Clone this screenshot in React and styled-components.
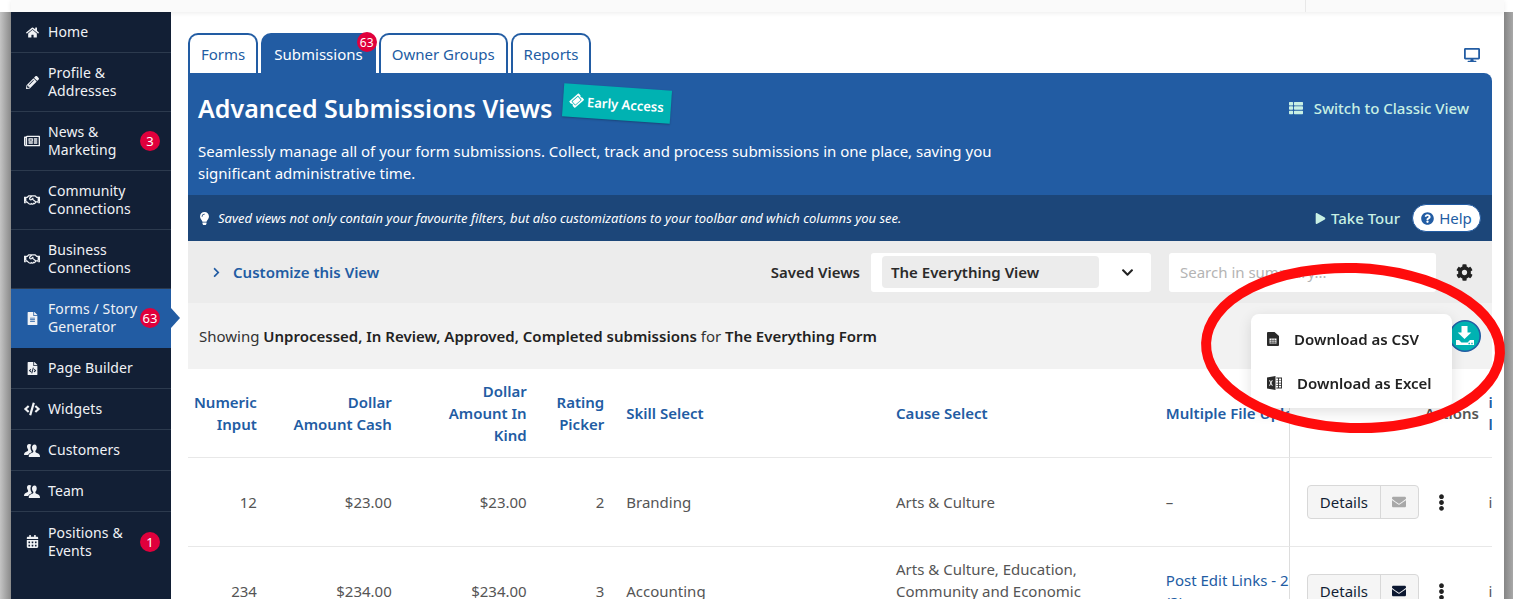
import React, { useLayoutEffect, useRef } from 'react';
import styled, { createGlobalStyle } from 'styled-components';
import {
  FaHome, FaPencilAlt, FaRegNewspaper, FaRegHandshake, FaFileAlt, FaFileCode, FaCode,
  FaCalendarAlt, FaTicketAlt, FaThList, FaDesktop, FaLightbulb, FaPlay, FaQuestionCircle,
  FaChevronRight, FaChevronDown, FaCog, FaEnvelope, FaEllipsisV,
} from 'react-icons/fa';

const BLUE = '#225ca3';
const FONT = '"Noto Sans", "Open Sans", Arial, sans-serif';

const GlobalStyle = createGlobalStyle`
  html, body { margin: 0; padding: 0; height: 100%; overflow: hidden; }
  body { font-family: ${FONT}; font-size: 15px; color: #222; background: #fff; }
  * { box-sizing: border-box; }
`;

const Frame = styled.div`
  width: 1513px;
  height: 599px;
  display: flex;
  position: relative;
  overflow: hidden;
`;

const LeftGutter = styled.div`
  width: 11px;
  flex: none;
  background: linear-gradient(to right, #c4c4c4, #8a8a8a);
  margin-top: 12px;
`;

const RightGutter = styled.div`
  width: 9px;
  flex: none;
  background: linear-gradient(to right, #858585, #a8a8a8);
  margin-top: 12px;
`;

const Center = styled.div`
  flex: 1;
  display: flex;
  flex-direction: column;
  min-width: 0;
`;

const TopBar = styled.div`
  height: 12px;
  flex: none;
  background: #fafafa;
  box-shadow: 0 1px 5px rgba(0, 0, 0, 0.08);
  display: flex;
  justify-content: flex-end;
  position: relative;
  z-index: 2;
`;

const TopCell = styled.div`
  width: 199px;
  border-left: 1px solid #e8e8e8;
`;

const Body = styled.div`
  flex: 1;
  display: flex;
  min-height: 0;
`;

const Sidebar = styled.nav`
  width: 160px;
  flex: none;
  background: #121f35;
  color: #fff;
`;

const NavItem = styled.a`
  display: flex;
  align-items: center;
  position: relative;
  height: ${(p) => (p.$tall ? 59 : 41)}px;
  padding-left: 13px;
  border-bottom: 1px solid ${(p) => (p.$active ? BLUE : '#2c3a4e')};
  background: ${(p) => (p.$active ? BLUE : 'transparent')};
  font-size: 14px;
  line-height: 18px;
  color: #f0f2f5;

  &:last-child { border-bottom: 0; }

  ${(p) => p.$active && `
    &::after {
      content: '';
      position: absolute;
      right: -9px;
      top: 50%;
      margin-top: -10px;
      border-left: 9px solid ${BLUE};
      border-top: 10px solid transparent;
      border-bottom: 10px solid transparent;
    }
  `}
`;

const NavIcon = styled.span`
  width: 16px;
  height: 16px;
  margin-right: 8px;
  display: flex;
  align-items: center;
  justify-content: center;
  font-size: 13px;
  flex: none;
`;

const NavLabel = styled.span`
  flex: 1;
  letter-spacing: 0.1px;
`;

const Badge = styled.span`
  width: 20px;
  height: 20px;
  border-radius: 50%;
  background: #e0003c;
  color: #fff;
  font-size: 13px;
  display: flex;
  align-items: center;
  justify-content: center;
  margin-right: 11px;
  flex: none;
`;

const Main = styled.main`
  flex: 1;
  min-width: 0;
  padding: 21px 12px 0 17px;
  display: flex;
  flex-direction: column;
`;

const TabRow = styled.div`
  display: flex;
  align-items: flex-end;
  height: 40px;
  flex: none;
  gap: 3px;
  position: relative;
`;

const Tab = styled.a`
  height: 40px;
  padding: 0 ${(p) => p.$pad || 11}px;
  display: flex;
  align-items: center;
  border: 2px solid ${BLUE};
  border-bottom: 0;
  border-radius: 10px 10px 0 0;
  background: ${(p) => (p.$active ? BLUE : '#fff')};
  color: ${(p) => (p.$active ? '#fff' : BLUE)};
  font-size: 15px;
  position: relative;
`;

const TabBadge = styled.span`
  position: absolute;
  top: -3px;
  right: -3px;
  width: 20px;
  height: 20px;
  border-radius: 50%;
  background: #e0003c;
  color: #fff;
  font-size: 12px;
  display: flex;
  align-items: center;
  justify-content: center;
`;

const DesktopToggle = styled.span`
  margin-left: auto;
  margin-right: 12px;
  margin-bottom: 10px;
  color: ${BLUE};
  font-size: 16px;
  display: flex;
`;

const Hero = styled.section`
  height: 122px;
  flex: none;
  background: ${BLUE};
  border-radius: 0 8px 0 0;
  color: #fff;
  padding: 18px 23px 0 10px;
  position: relative;
`;

const HeroTop = styled.div`
  display: flex;
  align-items: center;
  height: 34px;
`;

const HeroTitle = styled.h1`
  margin: 0;
  font-size: 25px;
  line-height: 34px;
  font-weight: 600;
`;

const EarlyAccess = styled.span`
  display: inline-flex;
  align-items: center;
  gap: 4px;
  height: 33px;
  width: 108px;
  margin: -10px 0 0 11px;
  padding-left: 7px;
  background: #00b2b2;
  color: #fff;
  font-size: 13px;
  font-weight: 600;
  transform: rotate(4deg);
  box-shadow: 0 1px 2px rgba(0, 0, 0, 0.25);
`;

const ClassicLink = styled.a`
  margin-left: auto;
  display: flex;
  align-items: center;
  gap: 11px;
  color: #c8f0e4;
  font-size: 15px;
  font-weight: 500;
`;

const HeroText = styled.p`
  margin: 15px 0 0;
  width: 860px;
  font-size: 15px;
  line-height: 22px;
`;

const TipBar = styled.div`
  height: 46px;
  flex: none;
  background: #1c4679;
  color: #fff;
  display: flex;
  align-items: center;
  padding: 0 11px 0 10px;
`;

const TipText = styled.em`
  margin-left: 7px;
  font-size: 13px;
  flex: 1;
`;

const TourLink = styled.a`
  display: flex;
  align-items: center;
  gap: 5px;
  color: #c8f0e4;
  font-size: 15px;
  font-weight: 500;
`;

const HelpButton = styled.a`
  margin-left: 12px;
  height: 28px;
  width: 69px;
  border-radius: 14px;
  background: #fff;
  border: 1px solid ${BLUE};
  color: ${BLUE};
  font-size: 15px;
  display: flex;
  align-items: center;
  justify-content: center;
  gap: 5px;
`;

const Toolbar = styled.div`
  height: 62px;
  flex: none;
  background: #ececec;
  display: flex;
  align-items: center;
  padding: 0 19px 0 23px;
`;

const CustomizeLink = styled.a`
  display: flex;
  align-items: center;
  gap: 11px;
  color: ${BLUE};
  font-weight: 600;
  font-size: 15px;
  flex: 1;
`;

const SavedLabel = styled.span`
  font-weight: 600;
  font-size: 15px;
  color: #2a2a2a;
`;

const SavedSelect = styled.div`
  width: 280px;
  height: 39px;
  margin-left: 11px;
  background: #fff;
  border-radius: 3px;
  display: flex;
  align-items: center;
  padding: 0 17px 0 11px;
`;

const SavedValue = styled.span`
  flex: 1;
  height: 32px;
  margin-right: 22px;
  background: #ececec;
  border-radius: 4px;
  display: flex;
  align-items: center;
  padding-left: 9px;
  font-weight: 600;
  font-size: 15px;
  color: #2a2a2a;
`;

const SearchBox = styled.input`
  width: 267px;
  height: 39px;
  margin-left: 18px;
  border: 0;
  outline: 0;
  border-radius: 3px;
  background: #fff;
  padding: 0 11px;
  font-family: ${FONT};
  font-size: 15px;

  &::placeholder { color: #b4b4b4; }
`;

const GearButton = styled.span`
  margin-left: 20px;
  display: flex;
  font-size: 17px;
  color: #222;
`;

const InfoBar = styled.div`
  height: 66px;
  flex: none;
  background: #f2f2f2;
  display: flex;
  align-items: center;
  padding: 0 11px;
  font-size: 15px;
  color: #333;
  position: relative;
`;

const InfoText = styled.p`
  margin: 0;
  flex: 1;

  strong { font-weight: 600; color: #222; }
`;

const DownloadButton = styled.span`
  display: flex;
`;

const DownloadMenu = styled.div`
  position: absolute;
  top: 11px;
  right: 40px;
  width: 201px;
  height: 94px;
  background: #fff;
  border-radius: 8px;
  box-shadow: 0 4px 14px rgba(0, 0, 0, 0.12);
  padding: 3px 0;
  z-index: 5;
`;

const MenuItem = styled.a`
  height: 44px;
  display: flex;
  align-items: center;
  padding-left: 16px;
  gap: 15px;
  font-size: 15px;
  font-weight: 600;
  color: #222;
`;

const TableScroll = styled.div`
  flex: 1;
  min-height: 0;
  overflow: hidden;
`;

const Grid = styled.table`
  table-layout: fixed;
  border-collapse: separate;
  border-spacing: 0;
  width: 1720px;
  font-size: 15px;
`;

const HeadCell = styled.th`
  height: 89px;
  padding: 0 11px;
  border-bottom: 1px solid #e8e8e8;
  color: ${BLUE};
  font-weight: 600;
  line-height: 22px;
  text-align: ${(p) => (p.$right ? 'right' : 'left')};
`;

const Cell = styled.td`
  height: 89px;
  padding: 0 11px;
  border-bottom: 1px solid #e8e8e8;
  color: #555;
  line-height: 22px;
  text-align: ${(p) => (p.$right ? 'right' : 'left')};
  vertical-align: middle;
`;

const FileLink = styled.a`
  color: ${BLUE};
`;

const ActionsHead = styled(HeadCell)`
  position: sticky;
  right: 3px;
  background: #fff;
  border-left: 1px solid #ddd;
  color: #555;
  padding-right: 10px;
`;

const ActionsCell = styled(Cell)`
  position: sticky;
  right: 3px;
  background: #fff;
  border-left: 1px solid #ddd;
  padding: 0 0 0 17px;
`;

const EdgeHead = styled(HeadCell)`
  position: sticky;
  right: 0;
  background: #fff;
  padding: 0;
  overflow: hidden;
  white-space: nowrap;
`;

const EdgeCell = styled(Cell)`
  position: sticky;
  right: 0;
  background: #fff;
  padding: 0;
  overflow: hidden;
  white-space: nowrap;
`;

const ActionRow = styled.div`
  display: flex;
  align-items: center;
`;

const DetailsGroup = styled.div`
  display: flex;
  height: 34px;
  border: 1px solid #d8d8d8;
  border-radius: 4px;
  background: #f5f5f5;
`;

const DetailsButton = styled.a`
  width: 73px;
  display: flex;
  align-items: center;
  justify-content: center;
  border-right: 1px solid #d8d8d8;
  color: #121f35;
  font-size: 15px;
`;

const MailButton = styled.a`
  width: 37px;
  display: flex;
  align-items: center;
  justify-content: center;
  font-size: 14px;
  color: ${(p) => (p.$read ? '#a8a8a8' : '#0b1730')};
`;

const MoreButton = styled.span`
  margin-left: 14px;
  display: flex;
  font-size: 17px;
  color: #222;
`;

const Annotation = styled.svg`
  position: absolute;
  left: 1190px;
  top: 250px;
  z-index: 10;
  pointer-events: none;
`;

const PeopleIcon = () => (
  <svg width="16" height="15" viewBox="0 0 16 15" fill="currentColor">
    <path d="M5.2 1C3.7 1 3 2.2 3 3.6c0 1.2.5 2.2 1.1 2.8v1C3.4 8.4.7 8.8.2 10.6L0 12h4.2c.5-1.5 2.2-2.2 3.5-2.7V8.2C6.9 7.3 6.4 5.9 6.5 4.5c0-1.2.3-2.2.9-2.7C6.9 1.3 6.1 1 5.2 1z" />
    <path d="M10.6 1.6C8.9 1.6 8 3 8 4.6c0 1.4.6 2.6 1.3 3.2v1.1c-.8 1-3.8 1.4-4.4 3.3l-.2 1.8H16l-.2-1.8c-.5-1.9-3.6-2.3-4.4-3.3V7.8c.7-.6 1.3-1.8 1.3-3.2 0-1.6-.4-3-2.1-3z" />
  </svg>
);

const CsvIcon = () => (
  <svg width="12" height="14" viewBox="0 0 12 14" fill="#2a2a2a">
    <path d="M0 1a1 1 0 0 1 1-1h6.5L12 4v9a1 1 0 0 1-1 1H1a1 1 0 0 1-1-1z" />
    <path fill="#fff" d="M2.5 6.5h7v5h-7z" />
    <path d="M2.5 8h7v.6h-7zM2.5 9.8h7v.6h-7zM4.6 6.5h.6v5h-.6zM6.8 6.5h.6v5h-.6z" />
  </svg>
);

const ExcelIcon = () => (
  <svg width="15" height="14" viewBox="0 0 15 14" fill="#2a2a2a">
    <path d="M0 1.6 8.5 0v14L0 12.4z" />
    <path fill="#fff" d="m2 4.2 1 .0.9 1.7.9-1.7h1L4.4 7l1.5 2.8h-1L3.9 8 3 9.8H2L3.4 7z" />
    <path d="M9.3 1.6H15v10.8H9.3v-.9h1.8V9.9H9.3v-.7h1.8V7.4H9.3v-.7h1.8V5.1H9.3v-.7h1.8V2.6H9.3zM12 2.6v1.8h2.1V2.6zm0 2.5v1.6h2.1V5.1zm0 2.3v1.8h2.1V7.4zm0 2.5v1.6h2.1V9.9z" />
  </svg>
);

const DownloadIcon = () => (
  <svg width="32" height="34" viewBox="0 0 32 34">
    <circle cx="16" cy="17" r="15.2" fill="#00b2b2" stroke={BLUE} strokeWidth="1.6" />
    <path fill="#fff" d="M12.5 7h6v6.5h3.8L15.5 20l-6.8-6.5h3.8z" />
    <path fill="#fff" d="M7 21h3l2.5 2.5h6L21 21h4v5H7z" />
    <path fill="#00b2b2" d="M19.5 23.8h1.4v1.4h-1.4zM22.3 23.8h1.4v1.4h-1.4z" />
  </svg>
);

const navItems = [
  { label: 'Home', icon: <FaHome /> },
  { label: <>Profile &amp;<br />Addresses</>, icon: <FaPencilAlt />, tall: true },
  { label: <>News &amp;<br />Marketing</>, icon: <FaRegNewspaper size={16} />, tall: true, badge: 3 },
  { label: <>Community<br />Connections</>, icon: <FaRegHandshake size={18} />, tall: true },
  { label: <>Business<br />Connections</>, icon: <FaRegHandshake size={18} />, tall: true },
  { label: <>Forms / Story<br />Generator</>, icon: <FaFileAlt />, tall: true, badge: 63, active: true },
  { label: 'Page Builder', icon: <FaFileCode /> },
  { label: 'Widgets', icon: <FaCode size={16} /> },
  { label: 'Customers', icon: <PeopleIcon /> },
  { label: 'Team', icon: <PeopleIcon /> },
  { label: <>Positions &amp;<br />Events</>, icon: <FaCalendarAlt />, tall: true, badge: 1 },
];

const columns = [
  { title: <>Numeric<br />Input</>, width: 120, right: true },
  { title: <>Dollar<br />Amount Cash</>, width: 120, right: true },
  { title: <>Dollar<br />Amount In<br />Kind</>, width: 120, right: true },
  { title: <>Rating<br />Picker</>, width: 69, right: true },
  { title: 'Skill Select', width: 240 },
  { title: 'Cause Select', width: 240 },
  { title: 'Multiple File Upload', width: 240 },
  { title: 'Date', width: 200 },
];

const rows = [
  {
    cells: ['12', '$23.00', '$23.00', '2', 'Branding', 'Arts & Culture', '–', 'March 3, 2021'],
    read: true,
    edge: 'i',
  },
  {
    cells: [
      '234', '$234.00', '$234.00', '3', 'Accounting',
      <>Arts &amp; Culture, Education,<br />Community and Economic<br />Development</>,
      <FileLink>Post Edit Links - 2 months<br />(3).csv</FileLink>,
      'March 3, 2021',
    ],
    edge: 'i',
  },
];

const SCROLL_LEFT = 55;

const App = () => {
  const scrollRef = useRef(null);

  // the table sits scrolled a little to the right, as in the captured state
  useLayoutEffect(() => {
    scrollRef.current.scrollLeft = SCROLL_LEFT;
  }, []);

  return (
    <>
      <GlobalStyle />
      <Frame>
        <LeftGutter />
        <Center>
          <TopBar><TopCell /></TopBar>
          <Body>
            <Sidebar>
              {navItems.map((item, i) => (
                <NavItem key={i} $tall={item.tall} $active={item.active}>
                  <NavIcon>{item.icon}</NavIcon>
                  <NavLabel>{item.label}</NavLabel>
                  {item.badge && <Badge>{item.badge}</Badge>}
                </NavItem>
              ))}
            </Sidebar>
            <Main>
              <TabRow>
                <Tab>Forms</Tab>
                <Tab $active>Submissions<TabBadge>63</TabBadge></Tab>
                <Tab>Owner Groups</Tab>
                <Tab>Reports</Tab>
                <DesktopToggle><FaDesktop /></DesktopToggle>
              </TabRow>
              <Hero>
                <HeroTop>
                  <HeroTitle>Advanced Submissions Views</HeroTitle>
                  <EarlyAccess><FaTicketAlt size={13} style={{ transform: 'rotate(-45deg)' }} />Early Access</EarlyAccess>
                  <ClassicLink><FaThList size={14} />Switch to Classic View</ClassicLink>
                </HeroTop>
                <HeroText>
                  Seamlessly manage all of your form submissions. Collect, track and process submissions in one place, saving you significant administrative time.
                </HeroText>
              </Hero>
              <TipBar>
                <FaLightbulb size={13} />
                <TipText>Saved views not only contain your favourite filters, but also customizations to your toolbar and which columns you see.</TipText>
                <TourLink><FaPlay size={11} />Take Tour</TourLink>
                <HelpButton><FaQuestionCircle size={13} />Help</HelpButton>
              </TipBar>
              <Toolbar>
                <CustomizeLink><FaChevronRight size={11} />Customize this View</CustomizeLink>
                <SavedLabel>Saved Views</SavedLabel>
                <SavedSelect>
                  <SavedValue>The Everything View</SavedValue>
                  <FaChevronDown size={13} />
                </SavedSelect>
                <SearchBox placeholder="Search in summary..." />
                <GearButton><FaCog /></GearButton>
              </Toolbar>
              <InfoBar>
                <InfoText>
                  Showing <strong>Unprocessed, In Review, Approved, Completed submissions</strong> for <strong>The Everything Form</strong>
                </InfoText>
                <DownloadButton><DownloadIcon /></DownloadButton>
                <DownloadMenu>
                  <MenuItem><CsvIcon />Download as CSV</MenuItem>
                  <MenuItem><ExcelIcon />Download as Excel</MenuItem>
                </DownloadMenu>
              </InfoBar>
              <TableScroll ref={scrollRef}>
                <Grid>
                  <colgroup>
                    {columns.map((col, i) => <col key={i} style={{ width: col.width }} />)}
                    <col style={{ width: 178 }} />
                    <col style={{ width: 3 }} />
                  </colgroup>
                  <thead>
                    <tr>
                      {columns.map((col, i) => (
                        <HeadCell key={i} $right={col.right}>{col.title}</HeadCell>
                      ))}
                      <ActionsHead $right>Actions</ActionsHead>
                      <EdgeHead>i<br />l</EdgeHead>
                    </tr>
                  </thead>
                  <tbody>
                    {rows.map((row, r) => (
                      <tr key={r}>
                        {row.cells.map((cell, i) => (
                          <Cell key={i} $right={columns[i].right}>{cell}</Cell>
                        ))}
                        <ActionsCell>
                          <ActionRow>
                            <DetailsGroup>
                              <DetailsButton>Details</DetailsButton>
                              <MailButton $read={row.read}><FaEnvelope /></MailButton>
                            </DetailsGroup>
                            <MoreButton><FaEllipsisV /></MoreButton>
                          </ActionRow>
                        </ActionsCell>
                        <EdgeCell>{row.edge}</EdgeCell>
                      </tr>
                    ))}
                  </tbody>
                </Grid>
              </TableScroll>
            </Main>
          </Body>
        </Center>
        <RightGutter />
        <Annotation width="323" height="200" viewBox="0 0 323 200">
          <ellipse cx="163" cy="98" rx="147" ry="80" fill="none" stroke="#ff0c0c" strokeWidth="10" transform="rotate(2 163 98)" />
        </Annotation>
      </Frame>
    </>
  );
};

export default App;
